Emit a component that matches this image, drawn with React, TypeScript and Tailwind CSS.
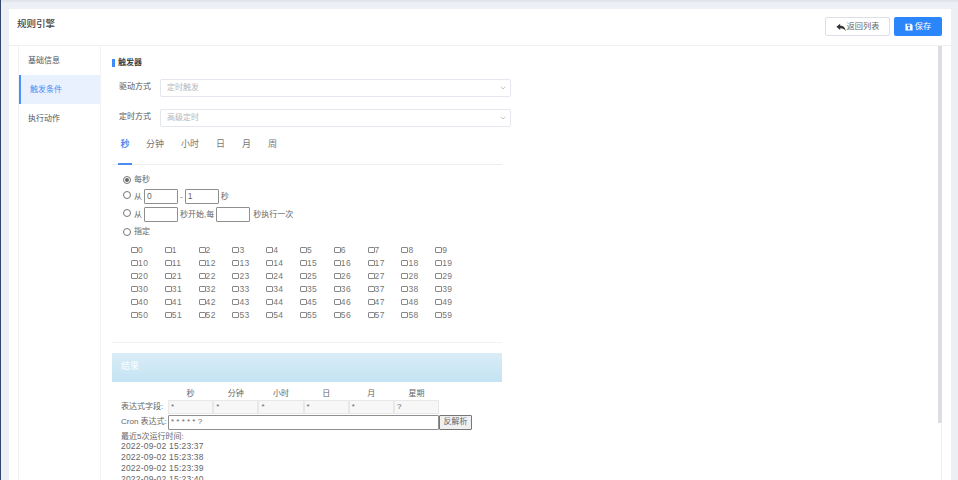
import { ChevronDown } from "lucide-react";

const font = "font-['Liberation_Sans','Noto_Sans_CJK_SC',sans-serif]";

const tabs = ["秒", "分钟", "小时", "日", "月", "周"];
const fields = ["秒", "分钟", "小时", "日", "月", "星期"];
const values = ["*", "*", "*", "*", "*", "?"];
const times = ["2022-09-02 15:23:37", "2022-09-02 15:23:38", "2022-09-02 15:23:39", "2022-09-02 15:23:40"];

function SelectRow({ label, value }: { label: string; value: string }) {
  return (
    <div className="flex items-center h-[18px]">
      <span className="w-[41px] ml-[7px] text-[8px] leading-[12px] text-[#555] -mt-[3px]">{label}</span>
      <div className="w-[351px] h-[18px] flex items-center justify-between pl-[6px] pr-[3px] border border-[#e4e7ed] rounded-[2px] bg-white text-[8px] text-[#b5b8bd]">
        {value}
        <ChevronDown size={8} className="text-[#aaa]" />
      </div>
    </div>
  );
}

function Radio({ checked, raised }: { checked?: boolean; raised?: boolean }) {
  return (
    <span className={`w-[8px] h-[8px] rounded-full border border-[#777] bg-white flex items-center justify-center shrink-0 ${raised ? "-mt-[3px]" : ""}`}>
      {checked && <span className="w-[4px] h-[4px] rounded-full bg-[#666]" />}
    </span>
  );
}

function SmallInput({ value }: { value?: string }) {
  return (
    <span className="w-[34px] h-[15px] mx-[2px] flex items-center pl-[2px] border border-[#8f8f8f] rounded-[1px] bg-white text-[8.5px] text-[#666]">
      {value}
    </span>
  );
}

export default function App() {
  return (
    <div className={`${font} h-[480px] w-[958px] overflow-hidden bg-[#ecf0f5] border-l border-[#34466e] relative`}>
      <div className="absolute top-0 left-0 right-0 h-[3px] bg-gradient-to-b from-[#dde0e6] to-[#ecf0f5]" />
      <div className="pt-[9px] pl-[8px] pr-[7px]">
        <div className="bg-white h-[480px]">
          <div className="h-[37px] flex justify-between border-b border-[#f0f0f0] pl-[8px] pr-[9px]">
            <h1 className="text-[9.5px] leading-[14px] text-[#444] font-medium mt-[8px]">规则引擎</h1>
            <div className="flex gap-[4px] mt-[8px]">
              <button className="w-[65px] h-[19px] pt-[1px] flex items-center justify-center gap-[1px] border border-[#dcdfe6] rounded-[2px] bg-white text-[8.2px] text-[#666]">
                <svg width="10" height="9" viewBox="0 0 12 10" className="fill-[#333]">
                  <path d="M0.5 4.2 L5 0.5 V2.8 C9 2.8 11.5 5 11.5 9.5 C10.3 7 8.4 6 5 6 V8 Z" />
                </svg>
                返回列表
              </button>
              <button className="w-[48px] h-[19px] pt-[1px] flex items-center justify-center gap-[2px] rounded-[2px] bg-[#2b85fb] text-[8.2px] text-white">
                <svg width="8" height="8" viewBox="0 0 10 10" className="fill-white">
                  <path fillRule="evenodd" d="M1 1 H7.8 L9.5 2.7 V9.5 H0.5 V1 Z M2.5 2 V4 H6.5 V2 Z M3.5 6.5 A1.5 1.5 0 1 0 6.5 6.5 A1.5 1.5 0 1 0 3.5 6.5 Z" />
                </svg>
                保存
              </button>
            </div>
          </div>
          <div className="flex pl-[9px]">
            <nav className="w-[83px] h-[440px] shrink-0 border-l border-r border-[#f2f2f2] text-[8px] text-[#555]">
              <div className="h-[29px] pl-[9px] flex items-center">基础信息</div>
              <div className="h-[29px] pl-[9px] flex items-center bg-[#e9f1fe] text-[#4a8cf0] border-l-2 border-[#4a90f8]">触发条件</div>
              <div className="h-[29px] pl-[9px] flex items-center">执行动作</div>
            </nav>
            <main className="flex-1 pl-[11px] pr-[9px] relative">
              <div className="absolute top-0 right-[9px] w-[4px] h-[377px] bg-[#dcdee2]" />
              <div className="absolute top-[377px] right-[9px] w-px h-[60px] bg-[#f0f0f0]" />
              <div className="flex items-center h-[10px] mt-[12px] text-[8px] font-bold text-[#444]">
                <span className="w-[2.5px] h-[8px] bg-[#3d8bfd] mr-[3.5px]" />
                触发器
              </div>
              <div className="mt-[11px] flex flex-col gap-[12px]">
                <SelectRow label="驱动方式" value="定时触发" />
                <SelectRow label="定时方式" value="高级定时" />
              </div>
              <div className="w-[390px] mt-[8px] h-[30px] flex border-b border-[#eeeeee] text-[9px] text-[#777]">
                {tabs.map((t, i) => (
                  <span
                    key={t}
                    className={
                      i === 0
                        ? "h-[30px] w-[14px] ml-[6px] text-center pt-[3px] mr-[14px] text-[#4a8cf0] font-bold border-b-2 border-[#4a8cf0]"
                        : "pt-[3px] mr-[17px]"
                    }
                  >
                    {t}
                  </span>
                ))}
              </div>
              <div className="pl-[11px] pt-[8px] text-[8px] text-[#666] flex flex-col">
                <div className="h-[13px] flex items-center gap-[3px]">
                  <Radio checked />每秒
                </div>
                <div className="h-[17px] mt-[2px] flex items-center">
                  <Radio raised /><span className="ml-[3px]">从</span>
                  <SmallInput value="0" />-
                  <SmallInput value="1" />秒
                </div>
                <div className="h-[17px] mt-[1px] flex items-center">
                  <Radio raised /><span className="ml-[3px]">从</span>
                  <SmallInput />秒开始,每
                  <SmallInput /><span className="ml-[1px]">秒执行一次</span>
                </div>
                <div className="h-[13px] mt-[2px] flex items-center gap-[3px]">
                  <Radio />指定
                </div>
              </div>
              <div className="pl-[19px] pt-[6px] grid grid-cols-[repeat(10,33.8px)] auto-rows-[12.95px] w-[360px] text-[8.5px] text-[#777] tracking-[0.4px]">
                {Array.from({ length: 60 }, (_, n) => (
                  <span key={n} className="flex items-center">
                    <span className="w-[7px] h-[6px] border border-[#888] rounded-[1px] bg-white" />
                    {n}
                  </span>
                ))}
              </div>
              <div className="w-[390px] border-t border-[#f2f2f2] mt-[20px]" />
              <div className="w-[390px] h-[29px] mt-[10px] pl-[9px] flex items-center bg-gradient-to-b from-[#d9edf7] to-[#c4e3f3] text-[9px] text-white">
                结果
              </div>
              <div className="pl-[9px] pt-[6px] text-[8px] text-[#666]">
                <div className="flex h-[12px] ml-[47px]">
                  {fields.map((f) => (
                    <span key={f} className="w-[45.2px] text-center">{f}</span>
                  ))}
                </div>
                <div className="flex items-center h-[14px]">
                  <span className="w-[47px]">表达式字段:</span>
                  {values.map((v, i) => (
                    <span key={i} className="w-[45.2px] h-[14px] pl-[2px] flex items-center border border-[#e8e8e8] bg-[#f7f7f7]">{v}</span>
                  ))}
                </div>
                <div className="flex items-center h-[15px] mt-[1px]">
                  <span className="w-[47px] whitespace-nowrap">Cron 表达式:</span>
                  <span className="w-[271px] h-[15px] pl-[2px] flex items-center border border-[#8f8f8f] rounded-[1px] bg-white">* * * * * ?</span>
                  <span className="w-[33px] h-[15px] flex items-center justify-center border border-[#777] rounded-[1px] bg-[#f0f0f0]">反解析</span>
                </div>
                <div className="h-[10px] leading-[11px] mt-[1px]">最近5次运行时间:</div>
                {times.map((t) => (
                  <div key={t} className="h-[11px] leading-[11px] text-[8.5px] tracking-[0.2px]">{t}</div>
                ))}
              </div>
            </main>
          </div>
        </div>
      </div>
    </div>
  );
}
